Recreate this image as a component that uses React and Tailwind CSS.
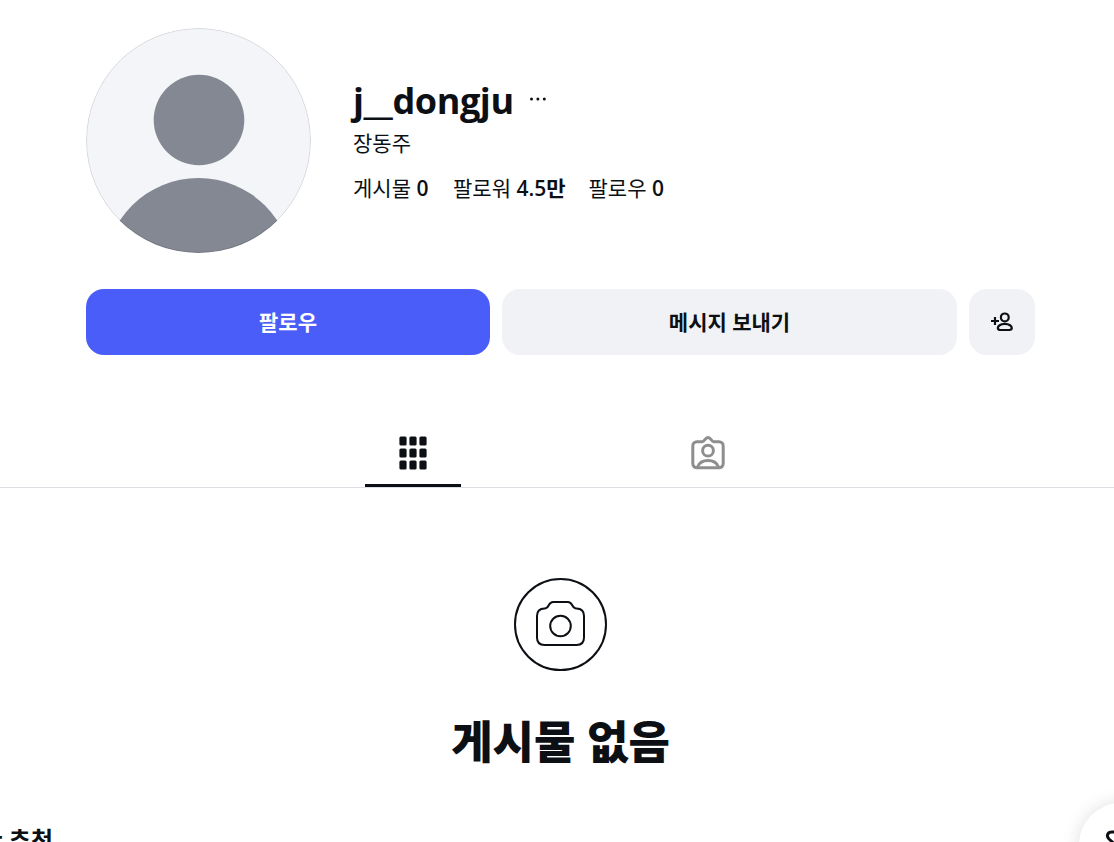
import React from "react";

const App = () => {
    return (
        <div className="relative h-[842px] w-full overflow-hidden bg-white font-['Open_Sans','Noto_Sans_CJK_KR',sans-serif] text-[#0c1014]">
            {/* Profile header */}
            <header className="flex gap-[42px] pt-7 pl-[86px]">
                <Avatar />
                <div className="pt-[49px]">
                    <div className="flex h-12 items-center">
                        <h1 className="w-[161px] text-[36px] leading-[48px] font-bold tracking-[-0.4px] whitespace-nowrap">
                            j__dongju
                        </h1>
                        <svg className="mt-[-4px] ml-[15px] h-4 w-[18px]" viewBox="0 0 18 16" fill="currentColor">
                            <circle cx="2.5" cy="8" r="1.5" />
                            <circle cx="8.9" cy="8" r="1.5" />
                            <circle cx="15.3" cy="8" r="1.5" />
                        </svg>
                    </div>
                    <p className="mt-[5px] text-[21px] leading-[27px]">장동주</p>
                    <div className="mt-[18px] flex gap-6 text-[21px] leading-[27px] whitespace-nowrap">
                        <Stat label="게시물" count="0" width="w-[76px]" />
                        <Stat label="팔로워" count="4.5" unit="만" width="w-[111.5px]" />
                        <Stat label="팔로우" count="0" width="w-[76px]" />
                    </div>
                </div>
            </header>

            {/* Actions */}
            <div className="mt-9 ml-[86px] flex h-[66px] gap-3 text-[21px] font-bold">
                <button className="w-[404px] rounded-[18px] bg-[#4a5df9] pt-0.5 text-white">팔로우</button>
                <button className="w-[455px] rounded-[18px] bg-[#f0f2f5] pt-0.5">메시지 보내기</button>
                <button className="flex w-[66px] items-center justify-center rounded-[18px] bg-[#f0f2f5]">
                    <AddUserIcon />
                </button>
            </div>

            {/* Tabs */}
            <nav className="mt-[65px] flex h-[68px] justify-center gap-[199px] border-b border-[#dbdfe4] pr-0.5 pl-[9px]">
                <div className="flex w-24 justify-center border-b-3 border-[#0c1014] pt-4">
                    <GridIcon />
                </div>
                <div className="flex w-24 justify-center pt-[15px]">
                    <TaggedIcon />
                </div>
            </nav>

            {/* Empty state */}
            <section className="flex flex-col items-center pt-[89px] pl-[7px]">
                <CameraIcon />
                <h2 className="mt-[44px] text-[45px] leading-[54px] font-black whitespace-nowrap">
                    게시물 없음
                </h2>
            </section>

            <h3 className="mt-[55px] -ml-[142px] w-[195px] text-right text-[24px] leading-8 font-bold whitespace-nowrap">
                회원님을 위한 추천
            </h3>

            {/* Floating message button */}
            <button className="absolute top-[803px] left-[1079px] h-[84px] w-[84px] rounded-full bg-white shadow-[0_0_18px_rgba(0,0,0,0.13)]">
                <svg className="ml-[26px] h-8 w-8" viewBox="0 0 32 32" fill="none" stroke="currentColor" strokeWidth="3">
                    <path d="M30 3H7C2.5 3 1 7 4 10L13 18L17 29C18.5 32 21 31 22 29L31 8C32 5 31 3 28 3Z" strokeLinejoin="round" />
                </svg>
            </button>
        </div>
    );
};

export default App;

const Stat = ({ label, count, unit, width }) => {
    return (
        <p className={width}>
            {label} <span className="font-semibold">{count}</span>
            {unit && <span className="font-bold">{unit}</span>}
        </p>
    );
};

const Avatar = () => {
    return (
        <div className="h-[225px] w-[225px] overflow-hidden rounded-full">
            <svg className="h-full w-full" viewBox="0 0 225 225">
                <circle cx="112.5" cy="112.5" r="112.5" fill="#f3f5f8" />
                <circle cx="113" cy="92" r="45.3" fill="#838893" />
                <circle cx="112.5" cy="244" r="94" fill="#838893" />
                <circle cx="112.5" cy="112.5" r="112" fill="none" stroke="#000" strokeOpacity="0.12" />
            </svg>
        </div>
    );
};

const AddUserIcon = () => {
    return (
        <svg className="h-6 w-6" viewBox="0 0 24 24" fill="none" stroke="currentColor" strokeWidth="2.2">
            <circle cx="14.8" cy="7.4" r="3.9" />
            <path d="M14.8 13.8c4.6 0 7 2.4 7 4.3 0 1.4-1.200 1.900-2.500 1.900h-9c-1.300 0-2.500-.5-2.500-1.900 0-1.900 2.400-4.300 7-4.300Z" />
            <path d="M5 7v8M1 11h8" />
        </svg>
    );
};

const GridIcon = () => {
    return (
        <svg className="h-[34px] w-7" viewBox="0 0 28 34" fill="currentColor">
            {[0, 12, 24].map((y) =>
                [0, 10, 20].map((x) => (
                    <rect key={`${x}-${y}`} x={x + 0.4} y={y + 0.4} width="7.2" height="9.2" rx="1.5" />
                ))
            )}
        </svg>
    );
};

const TaggedIcon = () => {
    return (
        <svg className="h-9 w-9 text-[#8e8e8e]" viewBox="0 0 36 36" fill="none" stroke="currentColor" strokeWidth="3" strokeLinejoin="round">
            <path d="M12.3 6.7C14.5 6.7 15 2.5 18 2.5S21.5 6.7 23.7 6.7H29A4.2 4.2 0 0 1 33.2 10.9V28.6A4.2 4.2 0 0 1 29 32.8H7A4.2 4.2 0 0 1 2.8 28.6V10.9A4.2 4.2 0 0 1 7 6.7Z" />
            <circle cx="18" cy="15.7" r="5.4" />
            <path d="M7.5 32c1.5-4 5.7-6.5 10.5-6.5S27 28 28.500 32" />
        </svg>
    );
};

const CameraIcon = () => {
    return (
        <svg className="h-[94px] w-[94px]" viewBox="0 0 94 94" fill="none" stroke="currentColor" strokeWidth="2">
            <circle cx="46.5" cy="47.5" r="45.5" />
            <circle cx="46.5" cy="49" r="10.3" />
            <path d="M54 25H39C34 25 35.500 31.500 30.500 31.500C25.500 31.500 23 34 23 39V60.500C23 65.500 26 68 30.500 68H62.500C67 68 70 65.500 70 60.500V39C70 34 67.500 31.500 62.500 31.500C57.500 31.500 59 25 54 25Z" />
        </svg>
    );
};
